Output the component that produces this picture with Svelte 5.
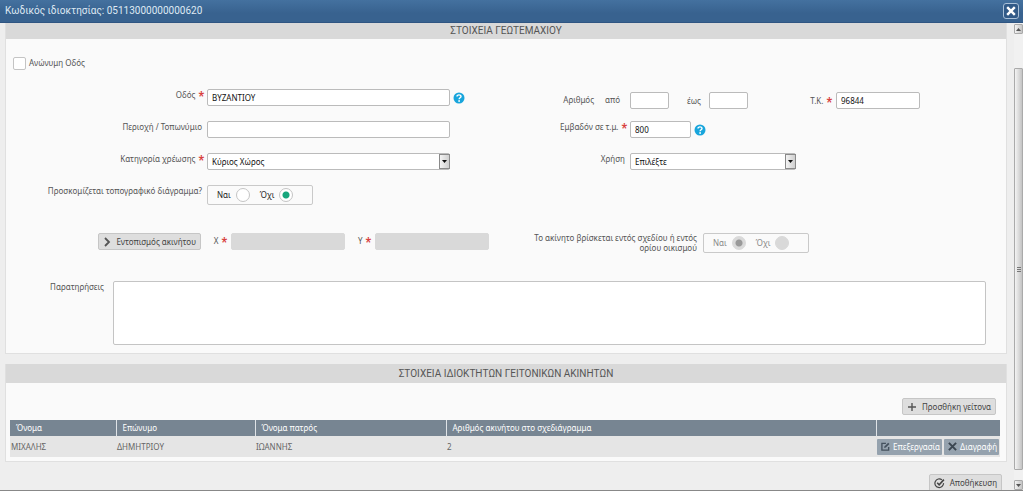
<script>
  let anonymous = $state(false);
  let street = $state("ΒΥΖΑΝΤΙΟΥ");
  let area = $state("");
  let numberFrom = $state("");
  let numberTo = $state("");
  let postcode = $state("96844");
  let surface = $state("800");
  let category = $state("Κύριος Χώρος");
  let usage = $state("Επιλέξτε");
  let diagram = $state("no");
  let inPlan = $state("yes");
  let remarks = $state("");
  let neighbours = $state([
    { name: "ΜΙΧΑΛΗΣ", surname: "ΔΗΜΗΤΡΙΟΥ", father: "ΙΩΑΝΝΗΣ", number: 2 },
  ]);
</script>

{#snippet help()}
  <button class="help" aria-label="Βοήθεια">
    <svg viewBox="0 0 12 12" width="12" height="12">
      <circle cx="6" cy="6" r="5.5" fill="#18a5dc" />
      <path d="M4 4.6C4 2.4 8 2.3 8 4.5C8 5.8 6.1 5.8 6.1 7.3" fill="none" stroke="#fff" stroke-width="1.4" />
      <circle cx="6.1" cy="9" r=".9" fill="#fff" />
    </svg>
  </button>
{/snippet}

{#snippet arrow()}
  <span class="arrow">
    <svg viewBox="0 0 5 3" width="5" height="3"><path d="M0 0H5L2.5 3Z" fill="#111" /></svg>
  </span>
{/snippet}

<div class="dialog">
  <header>
    <h1>Κωδικός ιδιοκτησίας: 05113000000000620</h1>
    <button class="close" aria-label="Κλείσιμο">
      <svg viewBox="0 0 10 10" width="10" height="10">
        <path d="M1.2 1.2L8.8 8.8M8.8 1.2L1.2 8.8" stroke="#fff" stroke-width="2.4" />
      </svg>
    </button>
  </header>

  <div class="body">
    <main>
      <section>
        <h2 class="first">ΣΤΟΙΧΕΙΑ ΓΕΩΤΕΜΑΧΙΟΥ</h2>
        <label class="anonymous">
          <input type="checkbox" bind:checked={anonymous} />
          Ανώνυμη Οδός
        </label>

        <div class="row">
          <label class="required" for="street">Οδός</label>
          <div class="field">
            <input class="full" id="street" bind:value={street} />
            {@render help()}
          </div>
          <div class="numbers">
            <span>Αριθμός</span>
            <label for="from">από</label>
          </div>
          <div class="field numbers-fields">
            <input class="tiny" id="from" bind:value={numberFrom} />
            <label class="to" for="to">έως</label>
            <input class="tiny" id="to" bind:value={numberTo} />
            <label class="required postcode" for="postcode">Τ.Κ.</label>
            <input class="code" id="postcode" bind:value={postcode} />
          </div>
        </div>

        <div class="row">
          <label for="area">Περιοχή / Τοπωνύμιο</label>
          <div class="field">
            <input class="full" id="area" bind:value={area} />
          </div>
          <label class="required" for="surface">Εμβαδόν σε τ.μ.</label>
          <div class="field">
            <input class="short" id="surface" bind:value={surface} />
            {@render help()}
          </div>
        </div>

        <div class="row">
          <label class="required" for="category">Κατηγορία χρέωσης</label>
          <div class="select full">
            <select id="category" bind:value={category}>
              <option>Κύριος Χώρος</option>
            </select>
            {@render arrow()}
          </div>
          <label for="usage">Χρήση</label>
          <div class="select medium">
            <select id="usage" bind:value={usage}>
              <option>Επιλέξτε</option>
            </select>
            {@render arrow()}
          </div>
        </div>

        <div class="row">
          <span class="label" id="diagram">Προσκομίζεται τοπογραφικό διάγραμμα?</span>
          <div class="radios" role="radiogroup" aria-labelledby="diagram">
            <label>Ναι <input type="radio" value="yes" bind:group={diagram} /></label>
            <label>Όχι <input type="radio" value="no" bind:group={diagram} /></label>
          </div>
        </div>

        <div class="location">
          <div class="locate">
            <button class="btn">
              <svg viewBox="0 0 8 10" width="8" height="10">
                <path d="M2 1L6 5L2 9" fill="none" stroke="#555" stroke-width="1.8" />
              </svg>
              Εντοπισμός ακινήτου
            </button>
          </div>
          <label class="required" for="x">X</label>
          <input id="x" disabled />
          <label class="required" for="y">Y</label>
          <input id="y" disabled />
          <span class="plan" id="plan">Το ακίνητο βρίσκεται εντός σχεδίου ή εντός ορίου οικισμού</span>
          <div class="radios off" role="radiogroup" aria-labelledby="plan">
            <label>Ναι <input type="radio" value="yes" bind:group={inPlan} disabled /></label>
            <label>Όχι <input type="radio" value="no" bind:group={inPlan} disabled /></label>
          </div>
        </div>

        <div class="remarks">
          <label for="remarks">Παρατηρήσεις</label>
          <textarea id="remarks" bind:value={remarks}></textarea>
        </div>
      </section>

      <section>
        <h2>ΣΤΟΙΧΕΙΑ ΙΔΙΟΚΤΗΤΩΝ ΓΕΙΤΟΝΙΚΩΝ ΑΚΙΝΗΤΩΝ</h2>
        <div class="tools">
          <button class="btn">
            <svg viewBox="0 0 10 10" width="10" height="10">
              <path d="M5 1V9M1 5H9" stroke="#555" stroke-width="1.4" />
            </svg>
            Προσθήκη γείτονα
          </button>
        </div>
        <table>
          <thead>
            <tr>
              <th>Όνομα</th>
              <th>Επώνυμο</th>
              <th>Όνομα πατρός</th>
              <th>Αριθμός ακινήτου στο σχεδιάγραμμα</th>
              <th aria-label="Ενέργειες"></th>
            </tr>
          </thead>
          <tbody>
            {#each neighbours as person}
              <tr>
                <td>{person.name}</td>
                <td>{person.surname}</td>
                <td>{person.father}</td>
                <td>{person.number}</td>
                <td>
                  <div class="actions">
                    <button>
                      <svg viewBox="0 0 10 10" width="9" height="9">
                        <path d="M5.5 1.5H1V9H8.5V5.5" fill="none" stroke="#44515e" stroke-width="1.5" />
                        <path d="M3.5 6.8L4 4.8L8 .8L9.4 2.2L5.4 6.2Z" fill="#44515e" />
                      </svg>
                      Επεξεργασία
                    </button>
                    <button>
                      <svg viewBox="0 0 10 10" width="9" height="9">
                        <path d="M1 1L9 9M9 1L1 9" stroke="#3b4651" stroke-width="2.2" />
                      </svg>
                      Διαγραφή
                    </button>
                  </div>
                </td>
              </tr>
            {/each}
          </tbody>
        </table>
      </section>

      <footer>
        <button class="btn save">
          <svg viewBox="0 0 12 12" width="11" height="11">
            <path d="M8.6 2A4.7 4.7 0 1 0 10.4 5.6" fill="none" stroke="#444" stroke-width="1.3" />
            <path d="M3.5 5.2L5.6 7.4L10.8 1.8" fill="none" stroke="#444" stroke-width="1.7" />
          </svg>
          Αποθήκευση
        </button>
      </footer>
    </main>

    <div class="scrollbar">
      <span class="step">
        <svg viewBox="0 0 5 3" width="5" height="3"><path d="M0 3H5L2.5 0Z" fill="#555" /></svg>
      </span>
      <span class="thumb">
        <svg viewBox="0 0 4 5" width="4" height="5"><path d="M0 .5H4M0 2.5H4M0 4.5H4" stroke="#777" /></svg>
      </span>
      <span class="step">
        <svg viewBox="0 0 5 3" width="5" height="3"><path d="M0 0H5L2.5 3Z" fill="#555" /></svg>
      </span>
    </div>
  </div>
</div>

<style>
  :global(body) {
    margin: 0;
    background: #eee;
  }

  .dialog {
    display: flex;
    flex-direction: column;
    height: 100vh;
    box-sizing: border-box;
    overflow: hidden;
    border-bottom: 1px solid #888;
    font-family: "Noto Sans", "Open Sans", sans-serif;
    font-size: 8px;
    line-height: 12px;
    color: #555;
  }

  .dialog * {
    box-sizing: border-box;
  }

  svg {
    display: block;
    flex: none;
  }

  button,
  input,
  select,
  textarea {
    margin: 0;
    font: inherit;
  }

  header {
    display: flex;
    flex: none;
    align-items: center;
    justify-content: space-between;
    height: 23px;
    padding: 0 4px 0 5px;
    background: linear-gradient(#44719f, #38628f 60%, #38628f);
    border-bottom: 1px solid #2f5582;
  }

  h1,
  h2 {
    margin: 0;
    font-family: Roboto, sans-serif;
    font-size: 10px;
    font-weight: 400;
  }

  h1 {
    color: #dfe9f3;
  }

  .close {
    display: flex;
    align-items: center;
    justify-content: center;
    width: 16px;
    height: 16px;
    padding: 0;
    background: #315a88;
    border: 1px solid #a9c0d8;
    border-radius: 3px;
  }

  .body {
    display: flex;
    flex: 1;
    min-height: 0;
  }

  main {
    flex: 1;
    padding: 0 7px 0 5px;
    overflow: hidden;
  }

  section {
    margin-bottom: 10px;
    background: #fafafa;
    border: 1px solid #e0e0e0;
    border-top: none;
  }

  h2 {
    height: 19px;
    line-height: 19px;
    text-align: center;
    color: #555;
    background: #d9d9d9;
  }

  h2.first {
    height: 16px;
    line-height: 16px;
  }

  .anonymous {
    display: flex;
    gap: 3px;
    width: max-content;
    margin: 18px 0 19px 7px;
  }

  input[type="checkbox"] {
    width: 13px;
    height: 13px;
    appearance: none;
    background: #fff;
    border: 1px solid #c4c4c4;
    border-radius: 2px;
  }

  .row {
    display: grid;
    grid-template-columns: 20.1% 24.3% 18% 1fr;
    align-items: start;
    height: 32px;
  }

  .row > label,
  .row > .label {
    padding-right: 5px;
    text-align: right;
  }

  .required::after {
    content: "*";
    margin-left: 3px;
    font-family: Roboto, sans-serif;
    font-size: 12px;
    font-weight: 900;
    line-height: 8px;
    vertical-align: -2px;
    color: #d8403f;
  }

  .row > .required {
    padding-right: 3px;
  }

  .field {
    display: flex;
    gap: 3px;
    align-items: center;
  }

  input:not([type]),
  select {
    height: 17px;
    padding: 0 4px;
    color: #111;
    background: #fff;
    border: 1px solid #bbb;
    border-radius: 2px;
  }

  input.full {
    flex: 0 0 100%;
    min-width: 0;
  }

  input:not([type]):disabled {
    background: #d9d9d9;
    border-color: #d9d9d9;
  }

  .help {
    flex: none;
    padding: 0;
    background: none;
    border: none;
  }

  .numbers {
    display: flex;
    gap: 11px;
    justify-content: flex-end;
    padding: 5px 10px 0 0;
  }

  .numbers-fields {
    gap: 0;
    padding-top: 3px;
  }

  .tiny {
    width: 39px;
  }

  .to {
    width: 40px;
    padding-right: 8px;
    text-align: right;
  }

  .postcode {
    width: 88px;
    padding-right: 4px;
    text-align: right;
  }

  .code {
    width: 84px;
  }

  .short {
    width: 61px;
  }

  .select {
    position: relative;
  }

  .medium {
    width: 166px;
  }

  select {
    display: block;
    width: 100%;
    appearance: none;
  }

  .arrow {
    position: absolute;
    top: 1px;
    right: 0;
    display: flex;
    align-items: center;
    justify-content: center;
    width: 11px;
    height: 15px;
    background: linear-gradient(90deg, #f3f3f3, #cfcfcf);
    border: 1px solid #8a8a8a;
    pointer-events: none;
  }

  .radios {
    display: flex;
    flex: none;
    gap: 10px;
    align-items: center;
    width: 106px;
    height: 20px;
    padding-left: 9px;
    border: 1px solid #c9c9c9;
    border-radius: 2px;
    color: #222;
  }

  .radios label {
    display: flex;
    gap: 5px;
    align-items: center;
  }

  input[type="radio"] {
    width: 14px;
    height: 14px;
    appearance: none;
    background: #fff;
    border: 1px solid #c4c4c4;
    border-radius: 50%;
  }

  input[type="radio"]:checked {
    background: radial-gradient(circle, #16a67c 3px, #fff 4px);
  }

  .radios.off {
    color: #888;
  }

  .off input[type="radio"] {
    background: #d9d9d9;
    border-color: #d9d9d9;
  }

  .off input[type="radio"]:checked {
    background: radial-gradient(circle, #999 3px, #d9d9d9 4px);
  }

  .btn {
    display: flex;
    gap: 5px;
    align-items: center;
    height: 17px;
    padding: 0 4px;
    color: #444;
    white-space: nowrap;
    background: #dedede;
    border: 1px solid #c6c6c6;
    border-radius: 2px;
  }

  .location {
    display: flex;
    align-items: flex-start;
    margin-top: 16px;
  }

  .location > label {
    flex: none;
    width: 30px;
    padding: 2px 4px 0 0;
    text-align: right;
  }

  .location > input {
    width: 114px;
  }

  .locate {
    display: flex;
    flex: 0 0 19.5%;
    justify-content: flex-end;
  }

  .plan {
    width: 170px;
    margin-left: 38px;
    line-height: 10px;
    text-align: right;
  }

  .location .radios {
    margin-left: 6px;
  }

  .remarks {
    display: flex;
    gap: 9px;
    margin: 28px 20px 8px 0;
  }

  .remarks label {
    flex: 0 0 10%;
    text-align: right;
  }

  textarea {
    flex: 1;
    height: 64px;
    padding: 4px;
    resize: none;
    background: #fff;
    border: 1px solid #c4c4c4;
    border-radius: 2px;
  }

  .tools {
    display: flex;
    justify-content: flex-end;
    padding: 15px 10px 5px;
  }

  table {
    width: calc(100% - 10px);
    margin: 0 6px 4px 4px;
    table-layout: fixed;
    border-collapse: collapse;
  }

  th {
    height: 16px;
    padding: 0 6px;
    font-weight: 400;
    text-align: left;
    color: #fff;
    background: #778592;
  }

  th + th {
    border-left: 1px solid #dfe3e7;
  }

  th:nth-child(1) {
    width: 106px;
  }

  th:nth-child(2) {
    width: 139px;
  }

  th:nth-child(3) {
    width: 191px;
  }

  th:nth-child(5) {
    width: 124px;
  }

  td {
    height: 21px;
    padding: 0 1px;
    color: #666;
    background: #e5e5e5;
  }

  .actions {
    display: flex;
    gap: 2px;
  }

  .actions button {
    display: flex;
    gap: 3px;
    align-items: center;
    height: 16px;
    padding: 0 2px 0 4px;
    color: #fff;
    background: #95a2ae;
    border: none;
    border-radius: 1px;
  }

  footer {
    display: flex;
    justify-content: flex-end;
    padding: 2px 5px 0 0;
  }

  .save {
    height: 18px;
  }

  .scrollbar {
    display: flex;
    flex: none;
    flex-direction: column;
    gap: 10px;
    width: 9px;
    padding-top: 1px;
    background: #f1f1f1;
  }

  .scrollbar span {
    display: flex;
    align-items: center;
    justify-content: center;
    background: linear-gradient(90deg, #f3f3f3, #c4c4c4);
    border: 1px solid #aaa;
    border-radius: 1px;
  }

  .step {
    flex: none;
    height: 10px;
  }

  .thumb {
    flex: 1;
    margin-top: 24px;
  }
</style>
